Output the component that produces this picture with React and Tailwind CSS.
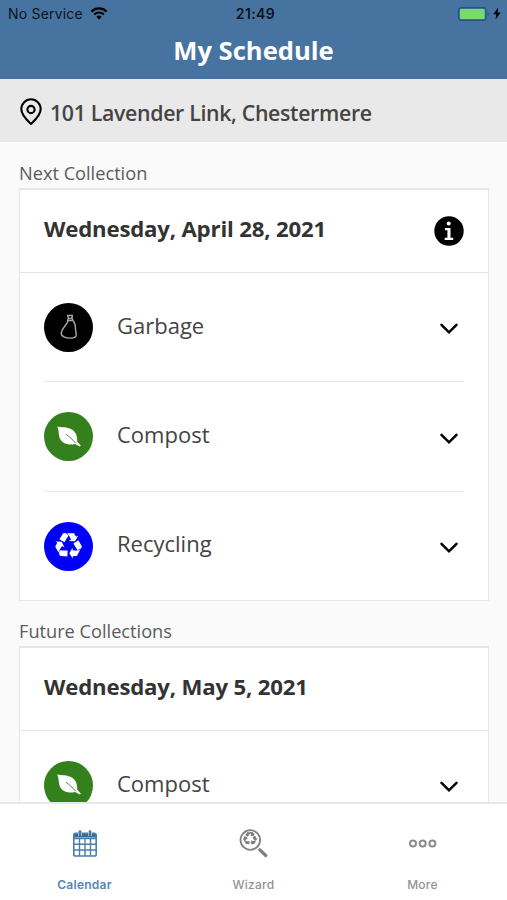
import React from "react";

const nextCollection = {
  date: "Wednesday, April 28, 2021",
  items: ["Garbage", "Compost", "Recycling"],
};

const futureCollection = {
  date: "Wednesday, May 5, 2021",
  items: ["Compost"],
};

function WifiIcon() {
  return (
    <svg width="18" height="13" viewBox="0 0 18 13" fill="none" stroke="black">
      <path d="M1.4 4.6a10.8 10.8 0 0 1 15.2 0" strokeWidth="2.3" />
      <path d="M4.2 7.5a6.8 6.8 0 0 1 9.6 0" strokeWidth="2.2" />
      <path d="M9 12.6 6.3 9.8a3.9 3.9 0 0 1 5.4 0z" fill="black" stroke="none" />
    </svg>
  );
}

function BatteryIcon() {
  return (
    <svg width="32" height="14" viewBox="0 0 32 14">
      <rect x="0.6" y="0.6" width="27.4" height="12.8" rx="2.6" fill="none" stroke="#2b527a" strokeWidth="1.2" />
      <rect x="2" y="2" width="24.6" height="10" rx="1" fill="#76db6c" />
      <path d="M29.6 5v4a2.2 2.2 0 0 0 0-4z" fill="#2b527a" />
    </svg>
  );
}

function BoltIcon() {
  return (
    <svg width="8" height="13" viewBox="0 0 8 13">
      <path d="M5.2.5.3 7.2h3L2.6 12.5l5-6.9H4.6z" fill="black" />
    </svg>
  );
}

function PinIcon() {
  return (
    <svg width="22" height="28" viewBox="0 0 22 28" fill="none" stroke="black" strokeWidth="2.1">
      <path d="M11 26C8.4 23.4 1.3 17.4 1.3 11a9.7 9.7 0 0 1 19.4 0c0 6.4-7.1 12.4-9.7 15z" strokeLinejoin="round" />
      <circle cx="11" cy="11.5" r="3.6" />
    </svg>
  );
}

function InfoIcon() {
  return (
    <svg width="30" height="30" viewBox="0 0 30 30">
      <circle cx="15" cy="15" r="14.7" fill="black" />
      <circle cx="14.7" cy="7.6" r="2" fill="white" />
      <path d="M11 12h5.5v9.8h2.7V24h-8.5v-2.2h2.7v-7.6H11z" fill="white" />
    </svg>
  );
}

function GarbageIcon() {
  return (
    <svg width="18" height="26" viewBox="0 0 18 26" fill="none" stroke="#a8a8a8" strokeWidth="1.4" strokeLinejoin="round">
      <path d="M7.6 1.5h4.9l-.6 2.3 1.2 2.7H7.7l.7-2.7z" />
      <path d="M8.4 4.5h3.8" />
      <path d="M8 6.8C7.5 10 2.5 13.5 1.3 18.5c-.9 4 4.7 5.6 9.2 5.6 4.3 0 6-1.4 5.7-4-.3-3.2-.9-4.6-.8-7.1 0-2.5-1.2-4-2-6.2" />
    </svg>
  );
}

function LeafIcon() {
  return (
    <svg width="24" height="22" viewBox="0 0 24 22">
      <path
        d="M.2.6c4.5 1.1 10 .3 14.2 2.7 4.4 2.6 6.2 6.9 5.7 12.1l3.7 4.1-.9 1-4.9-2.6c-5.1 1.5-10.8.8-14.1-3.6C.8 9.9 2.5 5 .2.6z"
        fill="white"
      />
      <path d="M9 8.3c3.5 2.3 6.3 5.2 9.8 8.9" fill="none" stroke="#34801d" strokeWidth=".9" />
    </svg>
  );
}

function RecycleIcon({ size, className }) {
  return (
    <svg width={size} height={size} viewBox="0 0 1792 1792" fill="currentColor" className={className}>
      <path d="M836 1169l-15 368-2 22-420-29q-36-3-67-31.5t-47-65.5q-11-27-14.5-55t4-65 12-55 21.5-64 19-53q78 12 509 28zm-387-586l180 379-147-92q-63 72-111.5 144.5t-72.5 125-39.5 94.5-18.5 63l-4 21-190-357q-17-26-18-56t6-47l8-18q35-63 114-188l-140-86zm1231 517l-188 359q-12 29-36.5 46.5t-43.5 20.5l-18 4q-71 7-219 12l8 164-230-367 211-362 7 173q170 16 283 5t170-33zm-785-924q-47 63-265 435l-317-187-19-12 225-356q20-31 60-45t80-10q24 2 48.5 12t42 21 41.5 33 36 34.5 36 39.5 32 35zm655 307l212 363q18 37 12.5 76t-27.5 74q-13 20-33 37t-38 28-48.5 22-47 16-51.5 14-46 12q-34-72-265-436l313-195zm-143-226l142-83-220 373-419-20 151-86q-34-89-75-166t-75.5-123.5-64.5-80-47-46.5l-17-13 405 1q31-3 58 10.5t39 28.5l11 15q39 61 112 190z" />
    </svg>
  );
}

function ChevronIcon() {
  return (
    <svg width="18" height="12" viewBox="0 0 18 12" fill="none" stroke="black" strokeWidth="2.5">
      <path d="M1.5 1.8 9 9.3l7.5-7.5" strokeLinecap="round" />
    </svg>
  );
}

function CalendarIcon() {
  return (
    <svg width="24" height="27" viewBox="0 0 24 27" fill="none" stroke="#4a7fb0">
      <path d="M1 3h22v4.5H1z" fill="#3a6d9e" stroke="none" />
      <rect x=".8" y="3.2" width="22.4" height="22.8" rx="1.8" strokeWidth="1.6" />
      <path d="M1 8.5h22M1 14.3h22M1 20h22M6.5 8.5V26M12 8.5V26M17.5 8.5V26" strokeWidth="1.4" />
      <path d="M7 .5V6M17 .5V6" stroke="#b5cce0" strokeWidth="3.6" />
      <path d="M7 .5V6M17 .5V6" stroke="#3a6d9e" strokeWidth="1.8" />
    </svg>
  );
}

function WizardIcon() {
  return (
    <div className="relative">
      <svg width="29" height="29" viewBox="0 0 29 29" fill="none" stroke="#808080">
        <circle cx="11.3" cy="11" r="9.8" strokeWidth="1.8" />
        <path d="m20.8 20.8 6 5.7" strokeWidth="3.2" strokeLinecap="round" />
      </svg>
      <RecycleIcon size={14} className="absolute top-[3.5px] left-[4.3px] text-[#808080]" />
    </div>
  );
}

function MoreIcon() {
  return (
    <svg width="28" height="9" viewBox="0 0 28 9" fill="none" stroke="#8c8c8c" strokeWidth="2">
      <circle cx="4" cy="4.5" r="3" />
      <circle cx="13.7" cy="4.5" r="3" />
      <circle cx="23.4" cy="4.5" r="3" />
    </svg>
  );
}

const streams = {
  Garbage: { color: "bg-black", icon: <GarbageIcon /> },
  Compost: { color: "bg-[#34801d]", icon: <LeafIcon /> },
  Recycling: { color: "bg-[#0000fa]", icon: <RecycleIcon size={27} className="text-white" /> },
};

function StreamRow({ name, first }) {
  const stream = streams[name];

  return (
    <div
      className={`mx-6 flex items-center ${
        first ? "h-[108px]" : "h-[109.5px] border-t border-[#e8e8e8] pt-px"
      }`}
    >
      <div className={`flex size-[49px] items-center justify-center rounded-full ${stream.color}`}>
        {stream.icon}
      </div>
      <span className={`ml-6 flex-1 text-[22px] text-[#444] ${first ? "pb-[3px]" : "pb-[5px]"}`}>
        {name}
      </span>
      <div className="mr-1.5 pt-1">
        <ChevronIcon />
      </div>
    </div>
  );
}

function CollectionCard({ title, collection, showInfo }) {
  return (
    <section className="mr-[18px] ml-[19px]">
      <h2 className="h-[28px] text-[18.2px] leading-[26px] text-[#5c5c5c]">{title}</h2>
      <div className="border border-t-2 border-[#e6e6e6] bg-white">
        <div className="flex h-[83px] items-center justify-between border-b border-[#e6e6e6] px-6">
          <span className="pb-[5px] text-[22.2px] font-bold tracking-[-0.18px] text-[#333]">
            {collection.date}
          </span>
          {showInfo ? <InfoIcon /> : null}
        </div>
        {collection.items.map((name, i) => (
          <StreamRow key={name} name={name} first={i === 0} />
        ))}
      </div>
    </section>
  );
}

function Tab({ icon, label, active }) {
  return (
    <div className="flex flex-1 flex-col items-center">
      <div className="flex h-[78px] items-center justify-center">{icon}</div>
      <span
        className={`-mt-[5px] font-['Inter'] text-xs leading-4 tracking-[0.25px] ${
          active ? "font-semibold text-[#5586b8]" : "font-medium text-[#929292]"
        }`}
      >
        {label}
      </span>
    </div>
  );
}

export default function App() {
  return (
    <div className="flex h-[900px] w-[507px] flex-col overflow-hidden bg-[#fafafa] font-['Open_Sans',sans-serif]">
      <header className="h-[79px] shrink-0 bg-[#4673a0]">
        <div className="grid h-[27px] grid-cols-[1fr_auto_1fr] items-center pr-1.5 pl-2 font-['Inter'] text-[14px] text-black/85">
          <div className="flex items-center gap-[7px]">
            <span className="tracking-[0.2px]">No Service</span>
            <WifiIcon />
          </div>
          <span className="pl-0.5 text-center font-semibold tracking-[0.4px]">21:49</span>
          <div className="flex items-center justify-end gap-[3px]">
            <BatteryIcon />
            <BoltIcon />
          </div>
        </div>
        <h1 className="text-center text-[25.6px] leading-[47px] font-bold text-white">My Schedule</h1>
      </header>

      <div className="flex h-[63px] shrink-0 items-center gap-2 bg-[#e9e9e9] px-5 pt-0.5">
        <PinIcon />
        <span className="pt-[3px] text-[21.3px] font-semibold tracking-[-0.33px] text-[#444]">
          101 Lavender Link, Chestermere
        </span>
      </div>

      <main className="flex min-h-0 flex-1 flex-col gap-[17px] overflow-hidden pt-[18px]">
        <CollectionCard title="Next Collection" collection={nextCollection} showInfo />
        <CollectionCard title="Future Collections" collection={futureCollection} />
      </main>

      <nav className="flex h-[98px] shrink-0 border-t-2 border-[#e8e8e8] bg-white">
        <Tab icon={<CalendarIcon />} label="Calendar" active />
        <Tab icon={<WizardIcon />} label="Wizard" />
        <Tab icon={<MoreIcon />} label="More" />
      </nav>
    </div>
  );
}
